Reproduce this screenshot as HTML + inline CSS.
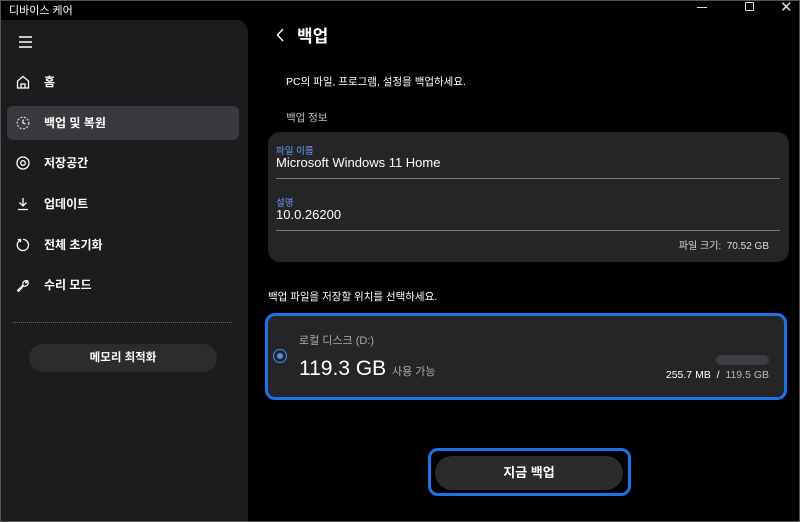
<!DOCTYPE html>
<html><head><meta charset="utf-8"><style>
*{margin:0;padding:0;box-sizing:border-box}
body{width:800px;height:522px;background:#000;overflow:hidden;position:relative;font-family:"Liberation Sans","Noto Sans CJK KR",sans-serif;color:#fff}
.frame{position:absolute;left:0;top:0;width:800px;height:522px;border:1px solid #555;pointer-events:none}
.a{position:absolute}
.t{font-size:12px;white-space:nowrap}
.side{left:1px;top:20px;width:247px;height:502px;background:#1c1c1f;border-radius:0 12px 0 0}
.nav{left:16px;font-size:12px;font-weight:bold;display:flex;align-items:center}
.nav svg{margin-right:14px}
</style></head><body>
<div class="a t" style="left:9px;top:2px;font-size:11px">디바이스 케어</div>
<div class="a" style="left:697px;top:7px;width:10px;height:1px;background:#ddd"></div>
<div class="a" style="left:745px;top:2px;width:9px;height:9px;border:1px solid #ddd;border-radius:1px"></div>
<div class="a t" style="left:780px;top:-2px;font-size:15px;color:#ddd">✕</div>
<div class="a side"></div>
<svg class="a" style="left:19px;top:36px" width="14" height="12"><path d="M0 1H13M0 6H13M0 11H13" stroke="#fff" stroke-width="1.4"/></svg>
<div class="a" style="left:7px;top:106px;width:232px;height:34px;background:#3a3a3e;border-radius:6px"></div>
<div class="a nav" style="top:73px"><svg width="14" height="14"><path d="M1.5 13V6L7 1.5 12.5 6V13ZM5 13V9H9V13" fill="none" stroke="#fff" stroke-width="1.3"/></svg>홈</div>
<div class="a nav" style="top:114px"><svg width="14" height="14"><circle cx="7" cy="7" r="5.8" fill="none" stroke="#ddd" stroke-width="1.2" stroke-dasharray="2 1.5"/><path d="M7 3.5V7L9.5 8" fill="none" stroke="#fff" stroke-width="1.2"/></svg>백업 및 복원</div>
<div class="a nav" style="top:154px"><svg width="14" height="14"><circle cx="7" cy="7" r="6" fill="none" stroke="#fff" stroke-width="1.3"/><circle cx="7" cy="7" r="2.3" fill="none" stroke="#fff" stroke-width="1.3"/></svg>저장공간</div>
<div class="a nav" style="top:195px"><svg width="14" height="14"><path d="M7 1V9M3.5 5.5L7 9 10.5 5.5M2 12.5H12" fill="none" stroke="#fff" stroke-width="1.3"/></svg>업데이트</div>
<div class="a nav" style="top:236px"><svg width="14" height="14"><path d="M4 2.2A5.6 5.6 0 1 0 7 1.4M1.8 1.5H4.5V4.2" fill="none" stroke="#fff" stroke-width="1.3"/></svg>전체 초기화</div>
<div class="a nav" style="top:276px"><svg width="14" height="14"><path d="M1.5 12.5L7 7A3.5 3.5 0 0 1 11 2.5L9.5 4.5 10 5 12 3.5A3.5 3.5 0 0 1 7.5 8L2.5 13.5Z" fill="none" stroke="#fff" stroke-width="1.2"/></svg>수리 모드</div>
<div class="a" style="left:13px;top:322px;width:219px;border-top:1px dotted #666"></div>
<div class="a" style="left:29px;top:344px;width:188px;height:28px;background:#2c2c2f;border-radius:14px;font-size:11.5px;font-weight:bold;text-align:center;line-height:28px">메모리 최적화</div>

<svg class="a" style="left:276px;top:28px" width="10" height="14"><path d="M7 1L1.5 7 7 13" fill="none" stroke="#fff" stroke-width="1.4"/></svg>
<div class="a t" style="left:297px;top:22px;font-size:17px;font-weight:bold">백업</div>
<div class="a t" style="left:286px;top:74px;font-size:10.5px">PC의 파일, 프로그램, 설정을 백업하세요.</div>
<div class="a t" style="left:286px;top:110px;font-size:10.5px;color:#bbb">백업 정보</div>
<div class="a" style="left:268px;top:132px;width:521px;height:130px;background:#252528;border-radius:12px"></div>
<div class="a t" style="left:276px;top:143px;font-size:9.5px;color:#6c9cf0">파일 이름</div>
<div class="a t" style="left:276px;top:155px;font-size:13px">Microsoft Windows 11 Home</div>
<div class="a" style="left:276px;top:178px;width:504px;height:1px;background:#777"></div>
<div class="a t" style="left:276px;top:195px;font-size:9.5px;color:#6c9cf0">설명</div>
<div class="a t" style="left:276px;top:207px;font-size:13px">10.0.26200</div>
<div class="a" style="left:276px;top:230px;width:504px;height:1px;background:#777"></div>
<div class="a t" style="right:31px;top:237px;font-size:10px;color:#ddd">파일 크기:&nbsp; 70.52 GB</div>
<div class="a t" style="left:268px;top:289px;font-size:10.5px">백업 파일을 저장할 위치를 선택하세요.</div>
<div class="a" style="left:265px;top:313px;width:522px;height:87px;border:3px solid #1a73e8;border-radius:10px;background:#252528"></div>
<div class="a" style="left:273px;top:349px;width:14px;height:14px;border:1.5px solid #4a8cf0;border-radius:50%"></div>
<div class="a" style="left:277px;top:353px;width:6px;height:6px;background:#4a8cf0;border-radius:50%"></div>
<div class="a t" style="left:299px;top:332px;font-size:11px;color:#aaa">로컬 디스크 (D:)</div>
<div class="a t" style="left:299px;top:357px;font-size:21px">119.3 GB <span style="font-size:11px;color:#aaa">사용 가능</span></div>
<div class="a" style="left:716px;top:355px;width:53px;height:10px;background:#3c3c40;border-radius:5px"></div>
<div class="a t" style="right:31px;top:369px;font-size:10.5px">255.7 MB &nbsp;/&nbsp; <span style="color:#bbb">119.5 GB</span></div>
<div class="a" style="left:428px;top:448px;width:203px;height:48px;border:3px solid #1a73e8;border-radius:10px"></div>
<div class="a" style="left:435px;top:456px;width:188px;height:34px;background:#2b2b2e;border-radius:17px;font-size:13px;font-weight:bold;text-align:center;line-height:34px">지금 백업</div>
<div class="frame"></div>
</body></html>
